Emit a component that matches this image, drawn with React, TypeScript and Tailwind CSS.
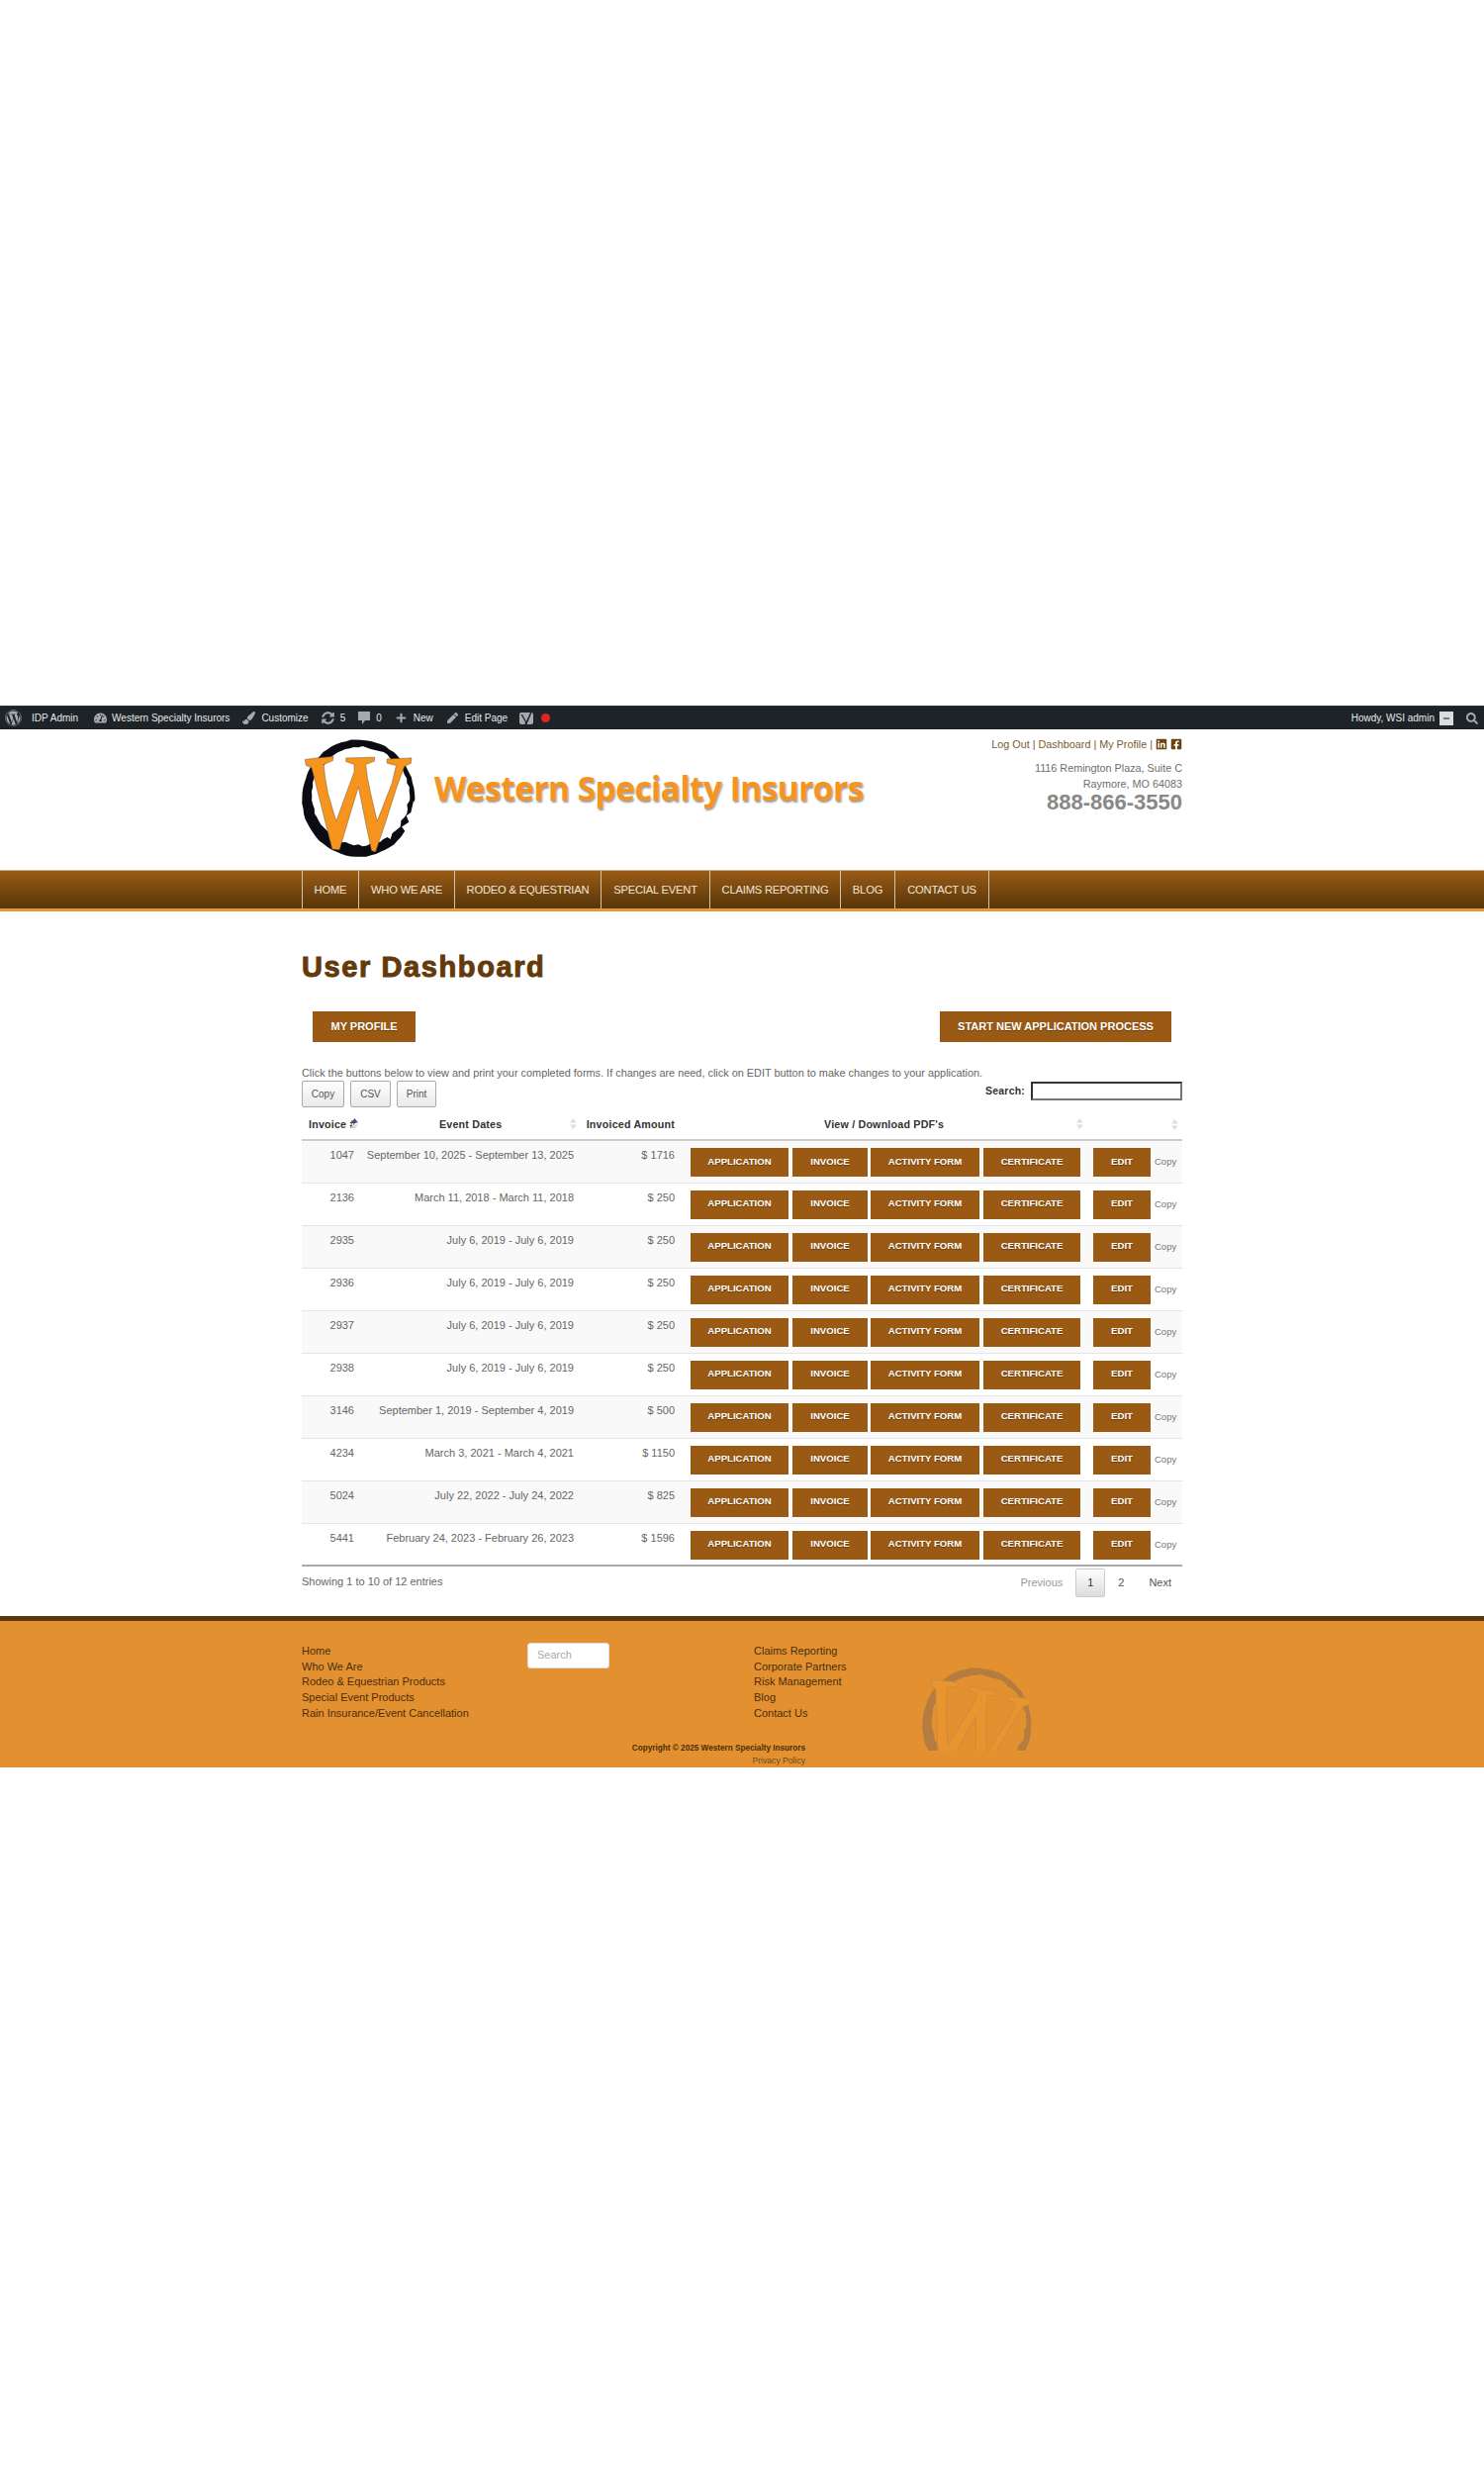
import React from "react";
import { FaWordpress, FaTachometerAlt, FaPaintBrush, FaSyncAlt, FaPlus, FaPen, FaSearch, FaLinkedin, FaFacebookSquare } from "react-icons/fa";

const W = "M55 97 L90 92 L142 88 L140 100 L112 112 L116 150 L125 200 L150 285 L190 175 L205 135 L205 112 L180 103 L180 92 L268 90 L266 102 L240 112 L245 150 L255 200 L275 285 L320 170 L333 115 L305 108 L305 95 L380 92 L378 108 L358 118 L335 180 L300 290 L270 378 L258 375 L240 290 L218 180 L195 255 L160 372 L138 370 L115 280 L90 180 L75 122 L58 115 Z";

function ringPath() {
  const pts = (cx: number, cy: number, rx: number, ry: number, amp: number, seed: number) => {
    const out: string[] = [];
    for (let i = 0; i < 70; i++) {
      const a = (i / 70) * Math.PI * 2;
      const n = Math.sin(i * 12.9898 + seed) * 43758.5453;
      const j = (n - Math.floor(n) - 0.5) * amp;
      out.push(`${(cx + (rx + j) * Math.cos(a)).toFixed(1)} ${(cy + (ry + j) * Math.sin(a)).toFixed(1)}`);
    }
    return "M" + out.join(" L") + " Z";
  };
  return pts(218, 215, 172, 179, 3, 1) + " " + pts(224, 208, 148, 150, 8, 5);
}

function Logo() {
  return (
    <svg width="116" height="120" viewBox="45 35 350 362" className="shrink-0">
      <path d={ringPath()} fill="#0b0b14" fillRule="evenodd" />
      <path d="M386 222 L398 240 L384 300 L362 318 L350 302 L372 288 L364 268 L378 258 Z" fill="#fff" />
      <path d="M300 330 L340 292 L346 302 L320 322 L316 340 Z" fill="#fff" />
      <path d={W} fill="#f7941d" stroke="#6b5a3a" strokeWidth="1.5" />
    </svg>
  );
}

function Watermark() {
  return (
    <svg width="112" height="84" viewBox="45 35 350 262">
      <path d={ringPath()} fill="#b47c3e" fillRule="evenodd" />
      <g transform="rotate(12 218 215) translate(-8 10)">
        <path d={W} fill="#e8952f" stroke="#cf8a3c" strokeWidth="3" />
      </g>
    </svg>
  );
}

function Sort({ dark }: { dark?: boolean }) {
  return (
    <svg width="7" height="11" viewBox="0 0 7 11" className="shrink-0">
      <path d="M3.5 0 L7 4.5 H0 Z" fill={dark ? "#4a4a8a" : "#ddd"} />
      <path d="M3.5 11 L7 6.5 H0 Z" fill="#ddd" />
    </svg>
  );
}

const rows = [
  ["1047", "September 10, 2025 - September 13, 2025", "$ 1716"],
  ["2136", "March 11, 2018 - March 11, 2018", "$ 250"],
  ["2935", "July 6, 2019 - July 6, 2019", "$ 250"],
  ["2936", "July 6, 2019 - July 6, 2019", "$ 250"],
  ["2937", "July 6, 2019 - July 6, 2019", "$ 250"],
  ["2938", "July 6, 2019 - July 6, 2019", "$ 250"],
  ["3146", "September 1, 2019 - September 4, 2019", "$ 500"],
  ["4234", "March 3, 2021 - March 4, 2021", "$ 1150"],
  ["5024", "July 22, 2022 - July 24, 2022", "$ 825"],
  ["5441", "February 24, 2023 - February 26, 2023", "$ 1596"],
];

function Btn({ w, children }: { w: string; children: React.ReactNode }) {
  return (
    <span className={`${w} h-[29px] pb-px flex items-center justify-center bg-[#9b5a14] text-white font-bold text-[9.6px] [text-shadow:0_1px_1px_rgba(0,0,0,.35)]`}>
      {children}
    </span>
  );
}

const adminText = "text-[10px] text-[#e8e8e8] whitespace-nowrap";

export default function App() {
  return (
    <div className="min-h-[2500px] bg-white font-['Liberation_Sans',Arial,sans-serif] text-[11px] text-[#666]">
      <div className="h-[713px]" />

      {/* Admin bar */}
      <div className="h-[24px] bg-[#1d2327] flex items-center justify-between pl-[5px] pr-[6px] border-t border-[#2c3338]">
        <div className="flex items-center">
          <FaWordpress className="w-[17px] h-[17px] text-[#a7aaad]" />
          <span className={`${adminText} ml-[10px]`}>IDP Admin</span>
          <FaTachometerAlt className="w-[13px] h-[13px] text-[#a7aaad] ml-[16px]" />
          <span className={`${adminText} ml-[5px]`}>Western Specialty Insurors</span>
          <FaPaintBrush className="w-[13px] h-[13px] text-[#a7aaad] ml-[13px]" />
          <span className={`${adminText} ml-[6px]`}>Customize</span>
          <FaSyncAlt className="w-[13px] h-[13px] text-[#a7aaad] ml-[13px]" />
          <span className={`${adminText} ml-[6px]`}>5</span>
          <svg width="12" height="14" viewBox="0 0 12 14" className="ml-[13px]">
            <path d="M0 0 H12 V9 H7 L4 13 V9 H0 Z" fill="#a7aaad" />
          </svg>
          <span className={`${adminText} ml-[6px] text-[#8c8f94]`}>0</span>
          <FaPlus className="w-[11px] h-[11px] text-[#a7aaad] ml-[14px]" />
          <span className={`${adminText} ml-[7px]`}>New</span>
          <FaPen className="w-[11px] h-[11px] text-[#a7aaad] ml-[14px]" />
          <span className={`${adminText} ml-[7px]`}>Edit Page</span>
          <svg width="14" height="14" viewBox="0 0 14 14" className="ml-[12px]">
            <rect x="0" y="1" width="14" height="12" rx="2" fill="#a7aaad" />
            <path d="M3 3 L7 10 L11 1 L12.5 1 L7.5 13 L5.5 13 L6 10.5 L1.5 3 Z" fill="#1d2327" />
          </svg>
          <span className="w-[9px] h-[9px] rounded-full bg-[#dc2626] ml-[8px]" />
        </div>
        <div className="flex items-center">
          <span className={adminText}>Howdy, WSI admin</span>
          <span className="w-[14px] h-[14px] bg-[#dcdcdc] ml-[5px] flex items-center justify-center">
            <span className="w-[6px] h-[2px] bg-[#777]" />
          </span>
          <FaSearch className="w-[12px] h-[12px] text-[#a7aaad] ml-[13px]" />
        </div>
      </div>

      {/* Header */}
      <div className="h-[142px] w-[890px] mx-auto flex justify-between">
        <div className="flex items-start pt-[10px]">
          <Logo />
          <span className="ml-[18px] mt-[27px] font-['Open_Sans',sans-serif] font-bold text-[33.6px] leading-[44px] text-[#f7941d] whitespace-nowrap tracking-[-0.6px] [text-shadow:1px_2px_2px_rgba(0,0,0,.4)]">
            Western Specialty Insurors
          </span>
        </div>
        <div className="flex flex-col items-end pt-[8px] text-[10.8px] text-[#6e6e6e]">
          <div className="flex items-center h-[14px] gap-[3px]">
            <span className="text-[#7a5a30]">Log Out | Dashboard | My Profile |</span>
            <FaLinkedin className="w-[12px] h-[12px] text-[#6b4210]" />
            <FaFacebookSquare className="w-[12px] h-[12px] text-[#6b4210]" />
          </div>
          <div className="mt-[9px] leading-[16px]">1116 Remington Plaza, Suite C</div>
          <div className="leading-[16px]">Raymore, MO 64083</div>
          <div className="text-[22px] font-bold leading-[22px] text-[#888]">888-866-3550</div>
        </div>
      </div>

      {/* Nav */}
      <div className="h-[42px] border-t border-[#c9b08c] border-b-[3px] border-b-[#e5982f] bg-gradient-to-b from-[#9a5b16] to-[#583609]">
        <div className="w-[890px] mx-auto flex h-full border-l border-[#cfc4b2]">
          {["HOME", "WHO WE ARE", "RODEO & EQUESTRIAN", "SPECIAL EVENT", "CLAIMS REPORTING", "BLOG", "CONTACT US"].map((t, i) => {
            const widths = ["w-[57px]", "w-[97px]", "w-[148px]", "w-[110px]", "w-[132px]", "w-[55px]", "w-[95px]"];
            return (
              <div key={t} className={`${widths[i]} border-r border-[#cfc4b2] flex items-center justify-center text-[11.2px] text-[#f0e6d8] whitespace-nowrap tracking-[-0.2px]`}>
                {t}
              </div>
            );
          })}
        </div>
      </div>

      {/* Main */}
      <div className="w-[890px] mx-auto h-[712px]">
        <h1 className="pt-[39px] text-[29px] leading-[34px] font-bold text-[#653a0b] tracking-[1.6px] [-webkit-text-stroke:1px_#653a0b]">User Dashboard</h1>

        <div className="mt-[28px] flex justify-between px-[11px]">
          <div className="w-[104px] h-[31px] bg-[#9b5a14] text-white font-bold text-[11px] flex items-center justify-center [text-shadow:0_1px_1px_rgba(0,0,0,.35)]">MY PROFILE</div>
          <div className="w-[234px] h-[31px] bg-[#9b5a14] text-white font-bold text-[11px] flex items-center justify-center [text-shadow:0_1px_1px_rgba(0,0,0,.35)]">START NEW APPLICATION PROCESS</div>
        </div>

        <p className="mt-[24px] text-[10.9px] leading-[14px] text-[#666]">
          Click the buttons below to view and print your completed forms. If changes are need, click on EDIT button to make changes to your application.
        </p>

        <div className="mt-px h-[27px] flex justify-between items-start">
          <div className="flex gap-[6px] text-[#555] text-[10px]">
            {[["Copy", "w-[43px]"], ["CSV", "w-[41px]"], ["Print", "w-[40px]"]].map(([t, w]) => (
              <div key={t} className={`${w} h-[27px] border border-[#aaa] rounded-[2px] bg-gradient-to-b from-white to-[#e9e9e9] flex items-center justify-center`}>{t}</div>
            ))}
          </div>
          <div className="flex items-center mt-px">
            <span className="font-bold text-[#333] text-[10.5px] mr-[6px] tracking-[0.2px]">Search:</span>
            <div className="w-[153px] h-[19px] border-2 border-[#767676] border-t-[#333] border-l-[#333] bg-white" />
          </div>
        </div>

        <table className="w-[890px] table-fixed border-collapse">
          <colgroup>
            <col className="w-[60px]" />
            <col className="w-[222px]" />
            <col className="w-[103px]" />
            <col className="w-[407px]" />
            <col className="w-[98px]" />
          </colgroup>
          <thead>
            <tr className="h-[33px] border-b-2 border-[#ccc] text-[#333] text-[10.7px] font-bold tracking-[0.2px]">
              <th className="p-0 pl-[7px] pt-[2px]">
                <div className="flex items-center font-bold whitespace-nowrap">Invoice #<span className="-ml-[5px]"><Sort dark /></span></div>
              </th>
              <th className="p-0 pt-[2px]">
                <div className="flex items-center justify-between pl-[79px] pr-[4px] font-bold"><span>Event Dates</span><Sort /></div>
              </th>
              <th className="p-0 pt-[2px] pr-[8px] text-right font-bold whitespace-nowrap">Invoiced Amount</th>
              <th className="p-0 pt-[2px]">
                <div className="flex items-center justify-between pl-[143px] pr-[2px] font-bold"><span>View / Download PDF's</span><Sort /></div>
              </th>
              <th className="p-0 pt-[2px]">
                <div className="flex justify-end pr-[4px]"><Sort /></div>
              </th>
            </tr>
          </thead>
          <tbody>
            {rows.map((r, i) => (
              <tr key={r[0]} className={`h-[43px] ${i < 9 ? "border-b border-[#e4e4e4]" : "border-b-2 border-[#aaa]"} ${i % 2 === 0 ? "bg-[#f9f9f9]" : "bg-white"}`}>
                <td className="p-0 pt-[7px] pr-[7px] text-right align-top leading-[14px]">{r[0]}</td>
                <td className="p-0 pt-[7px] pr-[7px] text-right align-top leading-[14px] whitespace-nowrap">{r[1]}</td>
                <td className="p-0 pt-[7px] pr-[8px] text-right align-top leading-[14px]">{r[2]}</td>
                <td className="p-0 pt-[7px] pl-[8px] align-top">
                  <div className="flex">
                    <Btn w="w-[99px]">APPLICATION</Btn>
                    <span className="w-[4px]" />
                    <Btn w="w-[76px]">INVOICE</Btn>
                    <span className="w-[3px]" />
                    <Btn w="w-[110px]">ACTIVITY FORM</Btn>
                    <span className="w-[4px]" />
                    <Btn w="w-[98px]">CERTIFICATE</Btn>
                  </div>
                </td>
                <td className="p-0 pt-[7px] pl-[8px] align-top">
                  <div className="flex items-center">
                    <Btn w="w-[58px]">EDIT</Btn>
                    <span className="ml-[4px] text-[9.5px] text-[#777]">Copy</span>
                  </div>
                </td>
              </tr>
            ))}
          </tbody>
        </table>

        <div className="mt-[2px] flex justify-between items-start">
          <span className="mt-[6px] text-[11px] leading-[14px] text-[#666]">Showing 1 to 10 of 12 entries</span>
          <div className="flex items-center h-[29px] text-[11px] mr-[11px]">
            <span className="text-[#999]">Previous</span>
            <span className="w-[30px] h-[29px] ml-[13px] border border-[#ccc] rounded-[2px] bg-gradient-to-b from-white to-[#dcdcdc] flex items-center justify-center text-[#333]">1</span>
            <span className="ml-[13px] text-[#555]">2</span>
            <span className="ml-[25px] text-[#555]">Next</span>
          </div>
        </div>
      </div>

      {/* Footer */}
      <div className="h-[153px] bg-[#e39031] border-t-[5px] border-[#5d3a0d]">
        <div className="w-[890px] mx-auto h-full relative">
          <div className="flex items-start pt-[23px] text-[11px] leading-[15.7px] text-[#4a2e08]">
            <ul className="w-[228px]">
              <li>Home</li>
              <li>Who We Are</li>
              <li>Rodeo &amp; Equestrian Products</li>
              <li>Special Event Products</li>
              <li>Rain Insurance/Event Cancellation</li>
            </ul>
            <div className="w-[229px] -mt-[1px]">
              <div className="w-[83px] h-[26px] bg-white rounded-[3px] border border-[#ddd] pl-[9px] flex items-center text-[#aaa]">Search</div>
            </div>
            <ul className="w-[170px]">
              <li>Claims Reporting</li>
              <li>Corporate Partners</li>
              <li>Risk Management</li>
              <li>Blog</li>
              <li>Contact Us</li>
            </ul>
            <div className="mt-[24px]"><Watermark /></div>
          </div>
          <div className="absolute left-[327px] w-[182px] top-[123px] text-right">
            <div className="text-[8.2px] font-bold leading-[12px] text-[#4a2e08] whitespace-nowrap">Copyright © 2025 Western Specialty Insurors</div>
            <div className="text-[8.6px] leading-[12px] text-[#6b4a1a]">Privacy Policy</div>
          </div>
        </div>
      </div>
    </div>
  );
}
